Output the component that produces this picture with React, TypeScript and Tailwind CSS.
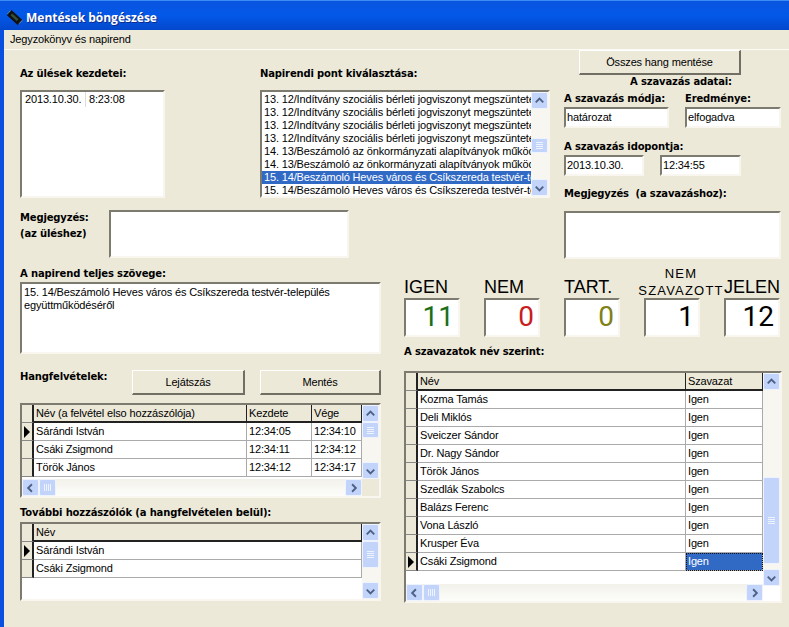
import type { ReactNode } from 'react';

const inset = 'border-2 border-t-[#7d7b70] border-l-[#7d7b70] border-r-[#f8f6ee] border-b-[#f8f6ee] bg-white';
const label = "font-['DejaVu_Sans'] font-bold text-[10px] leading-[14px] text-black whitespace-nowrap";

function Arrow({ dir }: { dir: 'up' | 'down' | 'left' | 'right' }) {
  const d = {
    up: 'M4 9.5 L8 5.5 L12 9.5',
    down: 'M4 6.5 L8 10.5 L12 6.5',
    left: 'M9.5 4 L5.5 8 L9.5 12',
    right: 'M6.5 4 L10.5 8 L6.5 12',
  }[dir];
  return (
    <div className="w-[17px] h-[17px] shrink-0 rounded-[2px] border border-[#eef3fe] bg-[#c3d4fb] flex items-center justify-center">
      <svg width="16" height="16" viewBox="0 0 16 16">
        <path d={d} fill="none" stroke="#4d6185" strokeWidth="2" />
      </svg>
    </div>
  );
}

function VScroll({ before, thumb }: { before: number; thumb: number }) {
  return (
    <div className="w-[17px] shrink-0 flex flex-col bg-[#f7f6f0]">
      <Arrow dir="up" />
      <div className="flex-1 min-h-0">
        <div style={{ height: before }} />
        <div className="rounded-[2px] border border-[#eef3fe] bg-[#c3d4fb] flex flex-col gap-[1px] items-center justify-center" style={{ height: thumb }}>
          <div className="w-[7px] h-px bg-[#eef3fe]" />
          <div className="w-[7px] h-px bg-[#eef3fe]" />
          <div className="w-[7px] h-px bg-[#eef3fe]" />
          <div className="w-[7px] h-px bg-[#eef3fe]" />
        </div>
      </div>
      <Arrow dir="down" />
    </div>
  );
}

function HScroll() {
  return (
    <div className="h-[17px] flex bg-gradient-to-b from-[#f2f1ea] to-[#fdfdfb]">
      <Arrow dir="left" />
      <div className="flex-1">
        <div className="w-[17px] h-[17px] rounded-[2px] border border-[#eef3fe] bg-[#c3d4fb] flex gap-[1px] items-center justify-center">
          <div className="w-px h-[7px] bg-[#eef3fe]" />
          <div className="w-px h-[7px] bg-[#eef3fe]" />
          <div className="w-px h-[7px] bg-[#eef3fe]" />
          <div className="w-px h-[7px] bg-[#eef3fe]" />
        </div>
      </div>
      <Arrow dir="right" />
    </div>
  );
}

function Indicator({ active }: { active?: boolean }) {
  return (
    <div className="w-[12px] h-[18px] shrink-0 bg-[#ece9d8] border-r-2 border-b border-r-[#222] border-b-[#888] flex items-center justify-center">
      {active && (
        <svg width="8" height="12" viewBox="0 0 8 12">
          <path d="M1 0 L7 6 L1 12 Z" fill="#000" />
        </svg>
      )}
    </div>
  );
}

function Cell({ w, children, head, selected }: { w?: number; children: ReactNode; head?: boolean; selected?: boolean }) {
  let cls = 'h-[18px] px-[2px] leading-[17px] whitespace-nowrap overflow-hidden border-r border-b ';
  if (head) cls += 'bg-[#ece9d8] border-r-[#222] border-b-2 border-b-[#222]';
  else if (selected) cls += 'bg-[#316ac5] text-white border-r-[#aaa] border-b-[#aaa] outline-1 -outline-offset-1 outline-dotted outline-[#111]';
  else cls += 'bg-white border-r-[#aaa] border-b-[#aaa]';
  return (
    <div className={cls + (w ? ' shrink-0' : ' flex-1')} style={w ? { width: w } : undefined}>
      {children}
    </div>
  );
}

function GridRow({ cols, cells, active, head, selectedCol }: { cols: (number | undefined)[]; cells: string[]; active?: boolean; head?: boolean; selectedCol?: number }) {
  return (
    <div className="flex h-[18px]">
      <Indicator active={active} />
      {cells.map((c, i) => (
        <Cell key={i} w={cols[i]} head={head} selected={selectedCol === i}>
          {c}
        </Cell>
      ))}
    </div>
  );
}

const agenda = [
  '13. 12/Indítvány szociális bérleti jogviszonyt megszüntetési',
  '13. 12/Indítvány szociális bérleti jogviszonyt megszüntetési',
  '13. 12/Indítvány szociális bérleti jogviszonyt megszüntetési',
  '13. 12/Indítvány szociális bérleti jogviszonyt megszüntetési',
  '14. 13/Beszámoló az önkormányzati alapítványok működéséről',
  '14. 13/Beszámoló az önkormányzati alapítványok működéséről',
  '15. 14/Beszámoló Heves város és Csíkszereda testvér-település',
  '15. 14/Beszámoló Heves város és Csíkszereda testvér-település',
];

const votes = ['Kozma Tamás', 'Deli Miklós', 'Sveiczer Sándor', 'Dr. Nagy Sándor', 'Török János', 'Szedlák Szabolcs', 'Balázs Ferenc', 'Vona László', 'Krusper Éva', 'Csáki Zsigmond'];

const counters = [
  { title: 'IGEN', value: '11', color: 'text-[#1a6e1a]' },
  { title: 'NEM', value: '0', color: 'text-[#c81e1e]' },
  { title: 'TART.', value: '0', color: 'text-[#808018]' },
  { title: 'NEM SZAVAZOTT', value: '1', color: 'text-black' },
  { title: 'JELEN', value: '12', color: 'text-black' },
];

function Button({ children, className }: { children: ReactNode; className: string }) {
  return (
    <div className={'border border-t-white border-l-white border-r-[#716f64] border-b-[#716f64] border-r-2 border-b-2 bg-[#ece9d8] flex items-center justify-center ' + className}>
      {children}
    </div>
  );
}

export default function App() {
  return (
    <div className="w-[789px] h-[627px] overflow-hidden bg-[#ece9d8] font-['Liberation_Sans',sans-serif] text-[11px] tracking-[-0.15px] text-black">
      {/* title bar */}
      <div className="h-[30px] flex items-center gap-[3px] pl-[6px] pt-[4px] bg-gradient-to-b from-[#0a55e0] via-[#0358e8] to-[#0348cc] border-t border-t-[#3c8cf5]">
        <svg width="17" height="17" viewBox="0 0 19 19">
          <path d="M6 1 L18 12 L13 18 L1 7 Z" fill="#111" />
          <path d="M7 5 L14 11.5 L12 13.5 L5 7 Z" fill="#35503a" />
          <path d="M2 5 L3 4 M4 3 L5 2 M15 16 L16 15 M17 14 L18 13" stroke="#c8d060" strokeWidth="1" />
        </svg>
        <span className="font-['Open_Sans',sans-serif] font-bold text-[12px] tracking-normal text-white [text-shadow:1px_1px_#0f2a89]">Mentések böngészése</span>
      </div>

      <div className="flex h-[597px]">
        <div className="w-[4px] shrink-0 bg-[#0a50e0]" />
        <div className="flex-1 min-w-0">
          {/* menu */}
          <div className="h-[20px] pl-[6px] leading-[19px] border-b border-b-[#fbfaf5]">Jegyzokönyv és napirend</div>

          {/* top section */}
          <div className="flex h-[215px]">
            <div className="w-[546px] shrink-0 pl-[16px]">
              <div className="flex h-[147px]">
                <div className="w-[240px] shrink-0 pt-[17px]">
                  <div className={label}>Az ülések kezdetei:</div>
                  <div className={inset + ' w-[145px] h-[108px] mt-[9px] pl-[2px] flex'}>
                    <span className="w-[62px] border-r border-r-[#ddd] pl-[1px] leading-[15px] h-[15px]">2013.10.30.</span>
                    <span className="pl-[3px] leading-[15px]">8:23:08</span>
                  </div>
                </div>
                <div className="w-[290px] pt-[17px]">
                  <div className={label}>Napirendi pont kiválasztása:</div>
                  <div className={inset + ' w-[290px] h-[108px] mt-[9px] flex'}>
                    <div className="flex-1 min-w-0 pt-[1px]">
                      {agenda.map((t, i) => (
                        <div key={i} className={'h-[13px] leading-[13px] pl-[2px] whitespace-nowrap overflow-hidden ' + (i === 6 ? 'bg-[#316ac5] text-white' : '')}>
                          {t}
                        </div>
                      ))}
                    </div>
                    <VScroll before={29} thumb={15} />
                  </div>
                </div>
              </div>
              <div className="flex mt-[13px]">
                <div className={label + ' w-[89px] leading-[16px]'}>
                  Megjegyzés:
                  <br />
                  (az üléshez)
                </div>
                <div className={inset + ' w-[240px] h-[48px]'} />
              </div>
            </div>

            <div className="flex-1 pl-[14px]">
              <Button className="w-[162px] h-[25px] ml-[15px]">Összes hang mentése</Button>
              <div className={label + ' w-[162px] ml-[36px] text-center'}>A szavazás adatai:</div>
              <div className="flex gap-[16px] mt-[3px]">
                <div>
                  <div className={label}>A szavazás módja:</div>
                  <div className={inset + ' w-[105px] h-[21px] mt-[1px] pl-[1px] leading-[17px]'}>határozat</div>
                </div>
                <div>
                  <div className={label}>Eredménye:</div>
                  <div className={inset + ' w-[96px] h-[21px] mt-[1px] pl-[1px] leading-[17px]'}>elfogadva</div>
                </div>
              </div>
              <div className={label + ' mt-[12px]'}>A szavazás idopontja:</div>
              <div className="flex gap-[16px] mt-[1px]">
                <div className={inset + ' w-[80px] h-[21px] pl-[1px] leading-[17px]'}>2013.10.30.</div>
                <div className={inset + ' w-[81px] h-[21px] pl-[1px] leading-[17px]'}>12:34:55</div>
              </div>
              <div className={label + ' mt-[11px]'}>Megjegyzés&nbsp; (a szavazáshoz):</div>
              <div className={inset + ' w-[217px] h-[48px] mt-[10px]'} />
            </div>
          </div>

          {/* lower section */}
          <div className="flex h-[362px]">
            <div className="w-[377px] shrink-0 ml-[16px] pt-[2px]">
              <div className={label}>A napirend teljes szövege:</div>
              <div className={inset + ' w-[361px] h-[72px] mt-[1px] pl-[2px] pt-[2px] leading-[13px]'}>
                15. 14/Beszámoló Heves város és Csíkszereda testvér-település
                <br />
                együttműködéséről
              </div>
              <div className="flex mt-[16px] h-[25px]">
                <div className={label + ' w-[112px]'}>Hangfelvételek:</div>
                <Button className="w-[113px] h-[25px]">Lejátszás</Button>
                <Button className="w-[121px] h-[25px] ml-[15px]">Mentés</Button>
              </div>
              <div className={inset + ' !bg-[#ece9d8] w-[361px] h-[95px] mt-[8px] flex'}>
                <div className="flex-1 min-w-0 flex flex-col">
                  <div className="flex-1 bg-white">
                    <GridRow head cols={[213, 65, undefined]} cells={['Név (a felvétel elso hozzászólója)', 'Kezdete', 'Vége']} />
                    <GridRow active cols={[213, 65, undefined]} cells={['Sárándi István', '12:34:05', '12:34:10']} />
                    <GridRow cols={[213, 65, undefined]} cells={['Csáki Zsigmond', '12:34:11', '12:34:12']} />
                    <GridRow cols={[213, 65, undefined]} cells={['Török János', '12:34:12', '12:34:17']} />
                  </div>
                  <HScroll />
                </div>
                <div className="w-[17px] flex h-[74px]">
                  <VScroll before={0} thumb={16} />
                </div>
              </div>
              <div className={label + ' mt-[8px]'}>További hozzászólók (a hangfelvételen belül):</div>
              <div className={inset + ' w-[361px] h-[79px] mt-[2px] flex'}>
                <div className="flex-1 min-w-0">
                  <GridRow head cols={[undefined]} cells={['Név']} />
                  <GridRow active cols={[undefined]} cells={['Sárándi István']} />
                  <GridRow cols={[undefined]} cells={['Csáki Zsigmond']} />
                </div>
                <VScroll before={0} thumb={27} />
              </div>
            </div>

            <div className="ml-[7px] w-[380px] flex flex-col">
              <div className="flex h-[72px] gap-[24px]">
                {counters.map((c) => (
                  <div key={c.title} className="w-[56px] flex flex-col justify-end">
                    {c.title === 'NEM SZAVAZOTT' ? (
                      <div className="w-[88px] ml-[-7px] mb-[-1px] text-center text-[13px] leading-[17px] tracking-[1.2px] whitespace-nowrap flex flex-col items-center">
                        <span>NEM</span>
                        <span>SZAVAZOTT</span>
                      </div>
                    ) : (
                      <div className="text-[18px] leading-[22px] whitespace-nowrap tracking-normal">{c.title}</div>
                    )}
                    <div className={inset + " h-[39px] font-['Roboto',sans-serif] text-[28px] leading-[34px] text-right pr-[4px] font-normal tracking-normal " + c.color}>{c.value}</div>
                  </div>
                ))}
              </div>
              <div className={label + ' mt-[8px]'}>A szavazatok név szerint:</div>
              <div className={inset + ' w-[378px] h-[232px] mt-[12px] flex'}>
                <div className="flex-1 min-w-0 flex flex-col">
                  <div className="flex-1 min-h-0 bg-white">
                    <GridRow head cols={[268, undefined]} cells={['Név', 'Szavazat']} />
                    {votes.map((v, i) => (
                      <GridRow key={v} active={i === 9} selectedCol={i === 9 ? 1 : undefined} cols={[268, undefined]} cells={[v, 'Igen']} />
                    ))}
                  </div>
                  <HScroll />
                </div>
                <div className="w-[17px] flex h-[213px]">
                  <VScroll before={87} thumb={87} />
                </div>
              </div>
            </div>
          </div>
        </div>
      </div>
    </div>
  );
}
